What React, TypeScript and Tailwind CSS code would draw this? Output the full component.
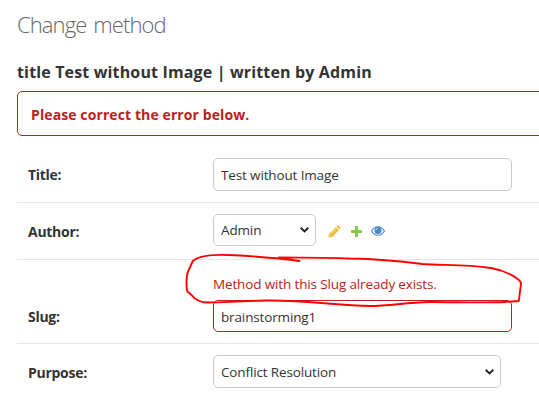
import type { ReactNode } from "react";

function Chevron() {
  return (
    <svg className="pointer-events-none shrink-0" width="9" height="6" viewBox="0 0 9 6" fill="none" stroke="#222" strokeWidth="1.9">
      <path d="M0.7 0.8 4.5 4.5 8.3 0.8" />
    </svg>
  );
}

function Pencil() {
  return (
    <svg width="13" height="13" viewBox="0 0 13 13" fill="#efb831">
      <path d="M0.5 12.6 1 8.9 7.7 2.2 10.8 5.3 4.1 12Z" />
      <path d="M8.4 1.5 9.4 .6Q10 .1 10.7 .7L12.2 2.2Q12.9 3 12.3 3.6L11.5 4.6Z" />
      <path d="M2.4 9.3 8 3.8M1.4 10.5 2.7 11.7" stroke="#fff4cf" strokeWidth=".8" />
    </svg>
  );
}

function Plus() {
  return (
    <svg width="11" height="11" viewBox="0 0 11 11" fill="#86c94f">
      <path d="M4 .7Q4 0 4.7 0H6.3Q7 0 7 .7V4H10.3Q11 4 11 4.7V6.3Q11 7 10.3 7H7V10.3Q7 11 6.3 11H4.7Q4 11 4 10.3V7H.7Q0 7 0 6.3V4.7Q0 4 .7 4H4Z" />
    </svg>
  );
}

function Eye() {
  return (
    <svg width="14" height="10" viewBox="0 0 14 10" fill="none" stroke="#4b87c9">
      <path d="M.6 5Q3 .7 7 .7T13.4 5Q11 9.3 7 9.3T.6 5Z" strokeWidth="1.1" />
      <circle cx="7" cy="4.4" r="3.5" fill="#4b87c9" stroke="none" />
      <path d="M5 4.2Q5.1 2.6 6.8 2.5" stroke="#d5e5f5" strokeWidth=".8" />
    </svg>
  );
}

function Row({ label, className, labelClass, children }: { label: string; className: string; labelClass: string; children: ReactNode }) {
  return (
    <div className={"flex border-b border-[#e6e6e6] pl-[11px] " + className}>
      <label className={"w-[185px] shrink-0 text-[14px] font-bold leading-[20px] tracking-[-0.28px] text-[#333] " + labelClass}>{label}</label>
      {children}
    </div>
  );
}

export default function App() {
  return (
    <main className="relative h-[400px] w-[539px] overflow-hidden bg-white pl-[17px] font-['Open_Sans',sans-serif] text-[13.5px] tracking-[-0.14px] text-[#333]">
      <h1 className="h-[58px] whitespace-nowrap pt-[9px] text-[22px] font-light leading-[30px] tracking-[-0.9px] text-[#666] [word-spacing:2px]">Change method</h1>
      <h2 className="h-[33px] whitespace-nowrap text-[16px] font-bold leading-[28px] tracking-[0.15px]">title Test without Image | written by Admin</h2>
      <p className="h-[45px] w-[540px] rounded-[5px] border border-[#ba2121] pl-[13px] text-[14px] font-bold leading-[45px] tracking-[0.1px] text-[#ba2121]">Please correct the error below.</p>
      <Row label="Title:" className="mt-[12px] h-[55px] pt-[10px]" labelClass="pt-[7px]">
        <div className="h-[33px] w-[299px] rounded-[5px] border border-[#ccc] pl-[7px] leading-[32px]">Test without Image</div>
      </Row>
      <Row label="Author:" className="h-[57px] pt-[11px]" labelClass="pt-[8px]">
        <div className="flex h-[32px] w-[103px] items-center justify-between rounded-[5px] border border-[#ccc] pl-[7px] pr-[6px]">
          <span>Admin</span><Chevron />
        </div>
        <div className="ml-[12px] flex h-[34px] items-center">
          <Pencil /><span className="ml-[10px]"><Plus /></span><span className="ml-[9px]"><Eye /></span>
        </div>
      </Row>
      <Row label="Slug:" className="h-[84px] pt-[14px]" labelClass="pt-[33px]">
        <div>
          <div className="h-[26px] leading-[20px] text-[#ba2121]">Method with this Slug already exists.</div>
          <div className="h-[32px] w-[299px] rounded-[5px] border border-[#ba2121] pl-[7px] leading-[32px]">brainstorming1</div>
        </div>
      </Row>
      <Row label="Purpose:" className="h-[57px] border-b-0 pt-[11px]" labelClass="pt-[8px]">
        <div className="flex h-[33px] w-[288px] items-center justify-between rounded-[5px] border border-[#ccc] pl-[7px] pr-[6px]">
          <span className="pt-[2px]">Conflict Resolution</span><Chevron />
        </div>
      </Row>
      <svg className="pointer-events-none absolute left-0 top-0" width="539" height="400" fill="none" stroke="#f00" strokeWidth="1.9" strokeLinecap="round" strokeLinejoin="round">
        <path d="M299.500 261C292 259.500 285 259.500 279 258.500C262 257 250 256 235 255.300C215 254 199 255.500 192.800 261L189 269.500C186 274 186 288 187.500 291.500L191.500 295C196 301 202 302.500 208 302.500C224 302.500 230 301.500 265 300.500C310 300 335 305.500 370 306C390 306 405 302.500 430 302C455 302 486 303 504 302L518.800 301L521 284C521.500 280 508 271 491 268C465 264 443 265.500 422 264C395 260.500 375 259 350 258.500C325 257.200 300 257.800 279 257.500" />
      </svg>
    </main>
  );
}
